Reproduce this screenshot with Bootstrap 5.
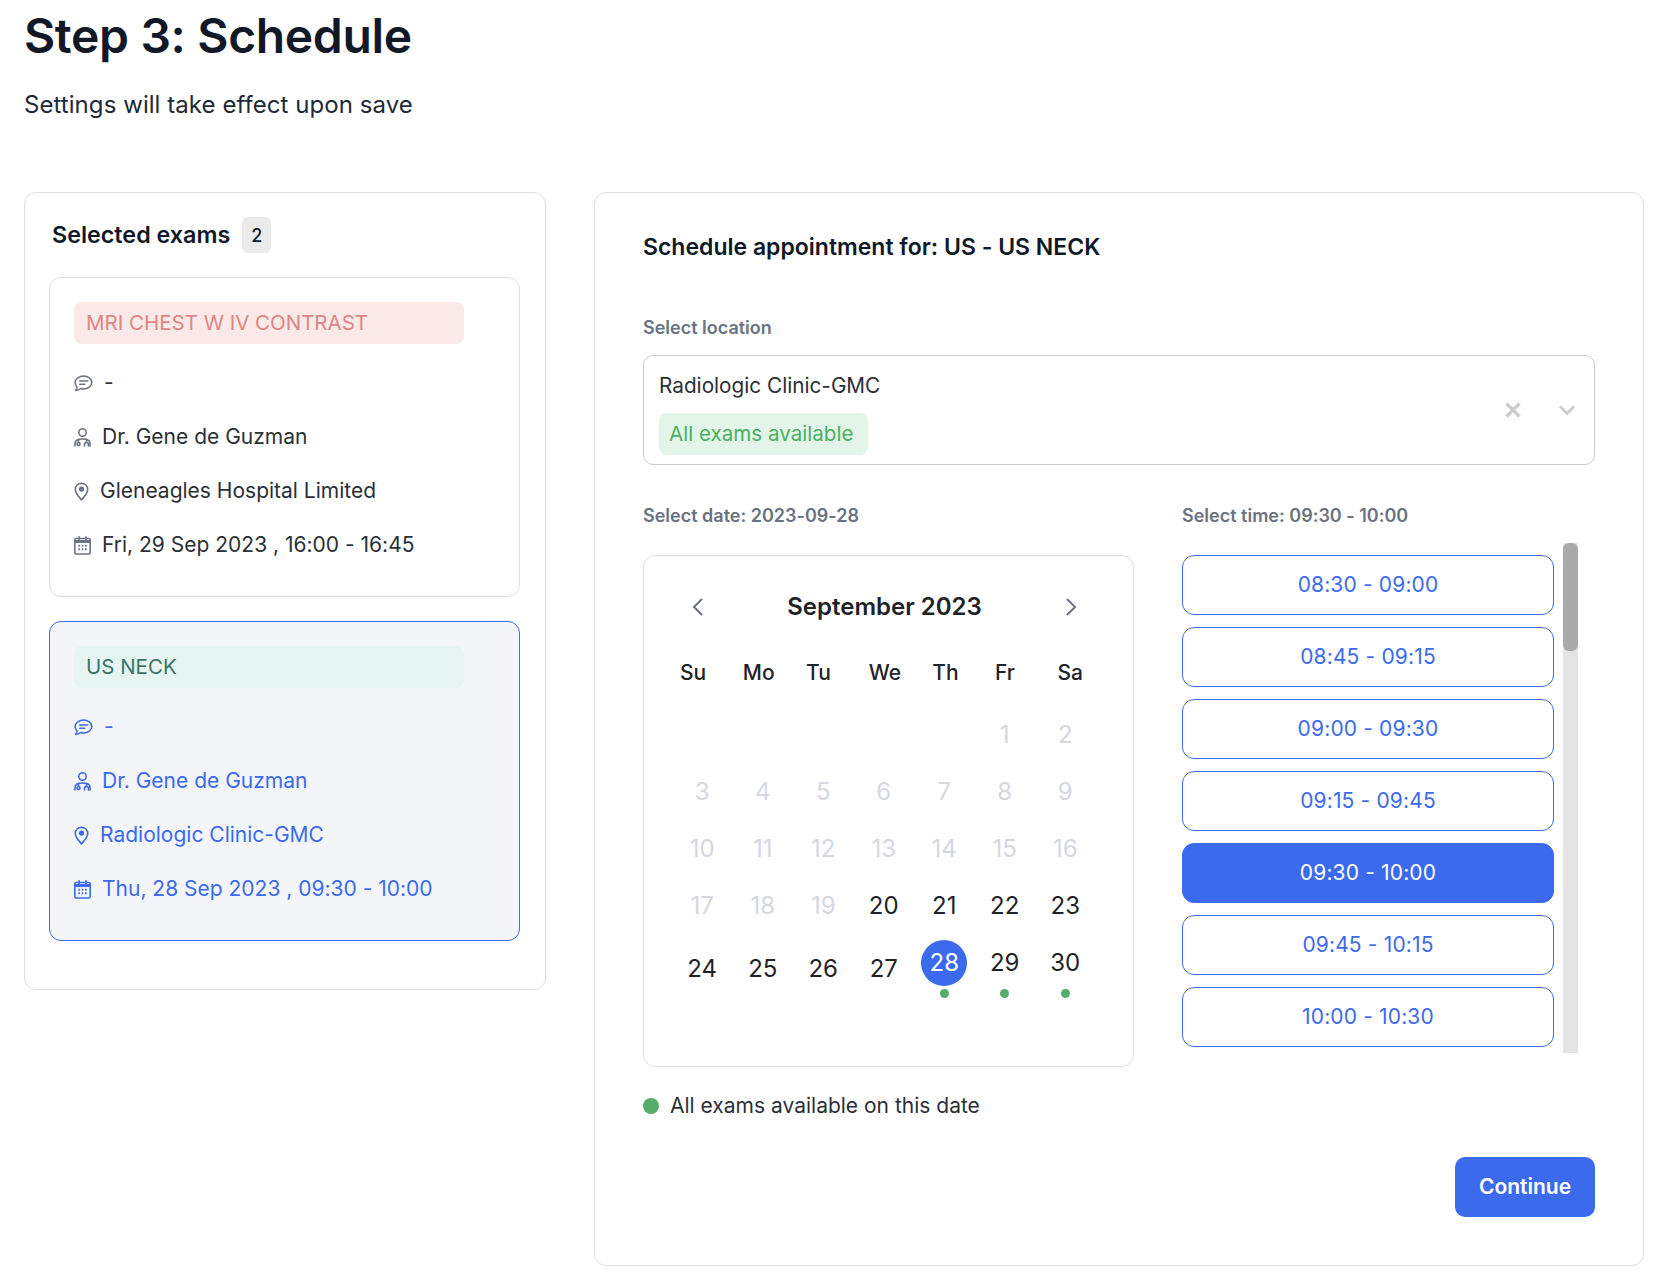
<!DOCTYPE html>
<html lang="en">
<head>
  <meta charset="utf-8">
  <meta name="viewport" content="width=device-width, initial-scale=1">
  <title>Step 3: Schedule</title>
  <link href="https://cdn.jsdelivr.net/npm/bootstrap@5.3.3/dist/css/bootstrap.min.css" rel="stylesheet">
  <style>
    body {
      font-family: Inter, "Liberation Sans", sans-serif;
      font-feature-settings: "calt" 0;
      color: #111827;
      background: #fff;
    }

    .page-wrap {
      padding: 7px 22px 0 24px;
    }

    .page-title {
      font-size: 48px;
      font-weight: 600;
      line-height: 58px;
      letter-spacing: -0.35px;
      margin: 0 0 24px;
      color: #111827;
    }

    .page-sub {
      font-size: 24px;
      line-height: 32px;
      letter-spacing: 0.06px;
      margin: 0 0 71px;
      color: #1f2937;
    }

    .panel {
      border: 1px solid #dcdfe6;
      border-radius: 12px;
      background: #fff;
    }

    .panel-left {
      width: 522px;
      height: 798px;
      padding: 24px 25px 0 24px;
      flex: none;
    }

    .panel-right {
      width: 1050px;
      height: 1074px;
      padding: 36px 48px 0;
      flex: none;
    }

    .panel-head {
      font-size: 23px;
      font-weight: 600;
      line-height: 36px;
      margin: 0;
      color: #111827;
    }

    .left-head {
      padding-left: 3px;
      gap: 12px;
    }

    .left-head .panel-head {
      font-size: 23.3px;
    }

    .count-pill {
      width: 29px;
      height: 36px;
      border-radius: 6px;
      background: #ebebeb;
      font-size: 18px;
      font-weight: 500;
      color: #111827;
    }

    .exam-box {
      height: 320px;
      padding: 24px;
      border: 1px solid #dcdfe6;
      border-radius: 12px;
      font-size: 21px;
      color: #2b2f36;
    }

    .exam-box.picked {
      background: #f3f5f8;
      border-color: #3b6bec;
      color: #3b6bec;
    }

    .exam-chip {
      width: 390px;
      height: 42px;
      padding: 0 12px;
      margin-bottom: 24px;
      border-radius: 8px;
      font-size: 20.5px;
      line-height: 42px;
    }

    .chip-red {
      background: #fbe9e8;
      color: #de8585;
    }

    .chip-green {
      background: #e6f5f1;
      color: #3b7565;
    }

    .info-row {
      height: 30px;
      margin-bottom: 24px;
      line-height: 30px;
    }

    .info-row svg {
      flex: none;
      color: #6b7280;
    }

    .info-row span {
      margin-left: 11px;
    }

    .picked .info-row svg {
      color: #3b6bec;
    }

    .field-label {
      font-size: 18px;
      font-weight: 600;
      line-height: 26px;
      color: #6b7280;
    }

    .loc-label {
      margin-top: 50px;
    }

    .loc-select {
      height: 110px;
      margin-top: 14px;
      padding: 16px 15px 0;
      border: 1px solid #ccc;
      border-radius: 10px;
      font-size: 20.75px;
      line-height: 28px;
      color: #2b2f36;
    }

    .loc-chip {
      width: 209px;
      height: 42px;
      margin-top: 13px;
      padding-left: 10px;
      border-radius: 8px;
      background: #e3f5e9;
      color: #4caf63;
      font-size: 20.6px;
      line-height: 42px;
    }

    .loc-icons {
      top: 45px;
      right: 18px;
      gap: 36px;
    }

    .pick-row {
      margin-top: 38px;
    }

    .date-col {
      width: 491px;
      flex: none;
    }

    .cal-box {
      height: 512px;
      margin-top: 26px;
      padding: 34px 0 0;
      border: 1px solid #dcdfe6;
      border-radius: 12px;
    }

    .cal-top {
      height: 34px;
      padding: 0 54px 0 46px;
    }

    .cal-month {
      font-size: 24px;
      font-weight: 600;
      line-height: 34px;
      color: #1f2328;
    }

    .dow-row {
      display: grid;
      grid-template-columns: 66px 65.5px 54px 79px 42px 77px 53.5px;
      margin: 35px 0 0 16px;
      font-size: 21px;
      font-weight: 500;
      line-height: 28px;
      text-align: center;
      color: #1f2328;
    }

    .day-grid {
      display: grid;
      grid-template-columns: repeat(7, 60.5px);
      row-gap: 11px;
      align-items: center;
      justify-items: center;
      margin: 25px 0 0 28px;
      font-size: 24px;
      line-height: 46px;
      color: #1f2328;
    }

    .day-cell {
      width: 46px;
      height: 46px;
      text-align: center;
    }

    .day-cell.off {
      color: #d5d8de;
    }

    .day-cell.on {
      border-radius: 50%;
      background: #3b6bec;
      color: #fff;
    }

    .day-dot {
      width: 9px;
      height: 9px;
      margin: 3px auto 0;
      border-radius: 50%;
      background: #55ad6c;
    }

    .legend-row {
      margin-top: 25px;
      font-size: 21px;
      line-height: 28px;
      color: #2b2f36;
    }

    .legend-dot {
      width: 16px;
      height: 16px;
      margin-right: 11px;
      border-radius: 50%;
      background: #55ad6c;
    }

    .time-col {
      width: 397px;
      margin-left: 48px;
    }

    .slot-wrap {
      height: 510px;
      margin-top: 14px;
      gap: 9px;
    }

    .slot-list {
      width: 372px;
      padding-top: 12px;
      gap: 12px;
      overflow: hidden;
    }

    .scroll-track {
      width: 15px;
      background: #e4e4e4;
    }

    .scroll-thumb {
      height: 108px;
      border-radius: 6px;
      background: #aaa;
    }

    .slot-btn {
      flex: none;
      height: 60px;
      padding: 0;
      border: 1.5px solid #3b6bec;
      border-radius: 12px;
      background: #fff;
      color: #3b6bec;
      font-size: 21px;
      letter-spacing: 0.15px;
    }

    .slot-btn.btn-primary {
      background: #3b6bec;
      color: #fff;
    }

    .go-btn {
      width: 140px;
      height: 60px;
      margin-top: 37px;
      padding: 0;
      border: 0;
      border-radius: 10px;
      background: #3b6bec;
      font-size: 21px;
      font-weight: 600;
    }
  </style>
</head>
<body>

<svg width="0" height="0" class="position-absolute">
  <symbol id="ic-chat" viewBox="1 1.500 18.500 17" fill="none" stroke="currentColor" stroke-width="1.5" stroke-linecap="round" stroke-linejoin="round">
    <path d="M10.500 2.500c4.200 0 8 2.600 8 6.500s-3.800 6.500-8 6.500c-1 0-2-.1-2.900-.5-1.500 1.100-3.300 1.700-5.300 1.800.9-.9 1.500-2 1.500-3.200C2.600 12 1.800 10.600 1.800 9c0-3.900 4.500-6.500 8.700-6.500z"/>
    <path d="M6.500 7.500h8M6.500 10.800h5"/>
  </symbol>
  <symbol id="ic-doc" viewBox="1.500 1 17 19" fill="none" stroke="currentColor" stroke-width="1.6" stroke-linecap="round" stroke-linejoin="round">
    <circle cx="10" cy="5.500" r="3.700"/>
    <path d="M2.500 19v-2.500c0-2.800 2.500-4.500 7.500-4.500s7.500 1.700 7.500 4.500V19"/>
    <path d="M6 12.500V15M14 12.500V15M12 19v-1.500a2 2 0 0 1 4 0V19"/>
    <circle cx="6" cy="17" r="1.500"/>
  </symbol>
  <symbol id="ic-pin" viewBox="2.500 1 15 18.800" fill="none" stroke="currentColor" stroke-width="1.6" stroke-linejoin="round">
    <path d="M10 18.800c-1.500-2-6.200-6.300-6.200-10.500a6.200 6.200 0 0 1 12.400 0c0 4.200-4.700 8.500-6.200 10.500z"/>
    <circle cx="10" cy="8" r="2.600" fill="currentColor" stroke="none"/>
  </symbol>
  <symbol id="ic-cal" viewBox="1.500 1 17 19" fill="none" stroke="currentColor" stroke-width="1.6" stroke-linecap="round">
    <rect x="2.300" y="3.500" width="15.400" height="15.500" rx="1.500"/>
    <path d="M2.800 6.500h14.400" stroke-width="3"/>
    <path d="M6.500 1.800v3M13.500 1.800v3"/>
    <path d="M5.800 10.800h1.600M9.200 10.800h1.600M12.600 10.800h1.600M5.800 14.200h1.600M9.200 14.200h1.600M12.600 14.200h1.600" stroke-width="1.900" stroke-linecap="butt"/>
  </symbol>
</svg>

<div class="page-wrap">
  <h1 class="page-title">Step 3: Schedule</h1>
  <p class="page-sub">Settings will take effect upon save</p>

  <div class="d-flex align-items-start gap-5 flex-nowrap">
    <!-- Selected exams -->
    <div class="panel panel-left">
      <div class="left-head d-flex align-items-center mb-4">
        <h2 class="panel-head">Selected exams</h2>
        <span class="count-pill d-flex align-items-center justify-content-center">2</span>
      </div>

      <div class="exam-box mb-4">
        <div class="exam-chip chip-red">MRI CHEST W IV CONTRAST</div>
        <div class="info-row d-flex align-items-center"><svg width="19" height="17"><use href="#ic-chat"/></svg><span>-</span></div>
        <div class="info-row d-flex align-items-center"><svg width="17" height="19"><use href="#ic-doc"/></svg><span>Dr. Gene de Guzman</span></div>
        <div class="info-row d-flex align-items-center"><svg width="15" height="19"><use href="#ic-pin"/></svg><span>Gleneagles Hospital Limited</span></div>
        <div class="info-row d-flex align-items-center"><svg width="17" height="19"><use href="#ic-cal"/></svg><span>Fri, 29 Sep 2023 , 16:00 - 16:45</span></div>
      </div>

      <div class="exam-box picked">
        <div class="exam-chip chip-green">US NECK</div>
        <div class="info-row d-flex align-items-center"><svg width="19" height="17"><use href="#ic-chat"/></svg><span>-</span></div>
        <div class="info-row d-flex align-items-center"><svg width="17" height="19"><use href="#ic-doc"/></svg><span>Dr. Gene de Guzman</span></div>
        <div class="info-row d-flex align-items-center"><svg width="15" height="19"><use href="#ic-pin"/></svg><span>Radiologic Clinic-GMC</span></div>
        <div class="info-row d-flex align-items-center"><svg width="17" height="19"><use href="#ic-cal"/></svg><span>Thu, 28 Sep 2023 , 09:30 - 10:00</span></div>
      </div>
    </div>

    <!-- Schedule form -->
    <div class="panel panel-right">
      <h2 class="panel-head">Schedule appointment for: US - US NECK</h2>

      <div class="field-label loc-label">Select location</div>
      <div class="loc-select position-relative">
        <div>Radiologic Clinic-GMC</div>
        <div class="loc-chip">All exams available</div>
        <div class="loc-icons position-absolute d-flex align-items-center">
          <svg width="18" height="18" viewBox="0 0 18 18" fill="none" stroke="#ccc" stroke-width="3.2"><path d="M2.500 2.500l13 13M15.500 2.500l-13 13"/></svg>
          <svg width="18" height="18" viewBox="0 0 18 18" fill="none" stroke="#ccc" stroke-width="3"><path d="M2 5.500l7 7 7-7"/></svg>
        </div>
      </div>

      <div class="pick-row d-flex">
        <div class="date-col">
          <div class="field-label">Select date: 2023-09-28</div>
          <div class="cal-box">
            <div class="cal-top d-flex align-items-center justify-content-between">
              <svg width="16" height="20" viewBox="0 0 16 20" fill="none" stroke="#6b7280" stroke-width="2"><path d="M12 2l-8 8 8 8"/></svg>
              <span class="cal-month">September 2023</span>
              <svg width="16" height="20" viewBox="0 0 16 20" fill="none" stroke="#6b7280" stroke-width="2"><path d="M4 2l8 8-8 8"/></svg>
            </div>
            <div class="dow-row"><span>Su</span><span>Mo</span><span>Tu</span><span>We</span><span>Th</span><span>Fr</span><span>Sa</span></div>
            <div class="day-grid">
              <span></span><span></span><span></span><span></span><span></span>
              <div class="day-cell off">1</div><div class="day-cell off">2</div>
              <div class="day-cell off">3</div><div class="day-cell off">4</div><div class="day-cell off">5</div><div class="day-cell off">6</div><div class="day-cell off">7</div><div class="day-cell off">8</div><div class="day-cell off">9</div>
              <div class="day-cell off">10</div><div class="day-cell off">11</div><div class="day-cell off">12</div><div class="day-cell off">13</div><div class="day-cell off">14</div><div class="day-cell off">15</div><div class="day-cell off">16</div>
              <div class="day-cell off">17</div><div class="day-cell off">18</div><div class="day-cell off">19</div><div class="day-cell">20</div><div class="day-cell">21</div><div class="day-cell">22</div><div class="day-cell">23</div>
              <div class="day-cell">24</div><div class="day-cell">25</div><div class="day-cell">26</div><div class="day-cell">27</div>
              <div><div class="day-cell on">28</div><div class="day-dot"></div></div>
              <div><div class="day-cell">29</div><div class="day-dot"></div></div>
              <div><div class="day-cell">30</div><div class="day-dot"></div></div>
            </div>
          </div>
          <div class="legend-row d-flex align-items-center"><span class="legend-dot"></span>All exams available on this date</div>
        </div>

        <div class="time-col">
          <div class="field-label">Select time: 09:30 - 10:00</div>
          <div class="slot-wrap d-flex">
            <div class="slot-list d-flex flex-column">
              <button type="button" class="btn slot-btn">08:30 - 09:00</button>
              <button type="button" class="btn slot-btn">08:45 - 09:15</button>
              <button type="button" class="btn slot-btn">09:00 - 09:30</button>
              <button type="button" class="btn slot-btn">09:15 - 09:45</button>
              <button type="button" class="btn slot-btn btn-primary">09:30 - 10:00</button>
              <button type="button" class="btn slot-btn">09:45 - 10:15</button>
              <button type="button" class="btn slot-btn">10:00 - 10:30</button>
            </div>
            <div class="scroll-track"><div class="scroll-thumb"></div></div>
          </div>
        </div>
      </div>

      <div class="d-flex justify-content-end">
        <button type="button" class="btn btn-primary go-btn">Continue</button>
      </div>
    </div>
  </div>
</div>

<script src="https://cdn.jsdelivr.net/npm/bootstrap@5.3.3/dist/js/bootstrap.bundle.min.js"></script>
</body>
</html>
